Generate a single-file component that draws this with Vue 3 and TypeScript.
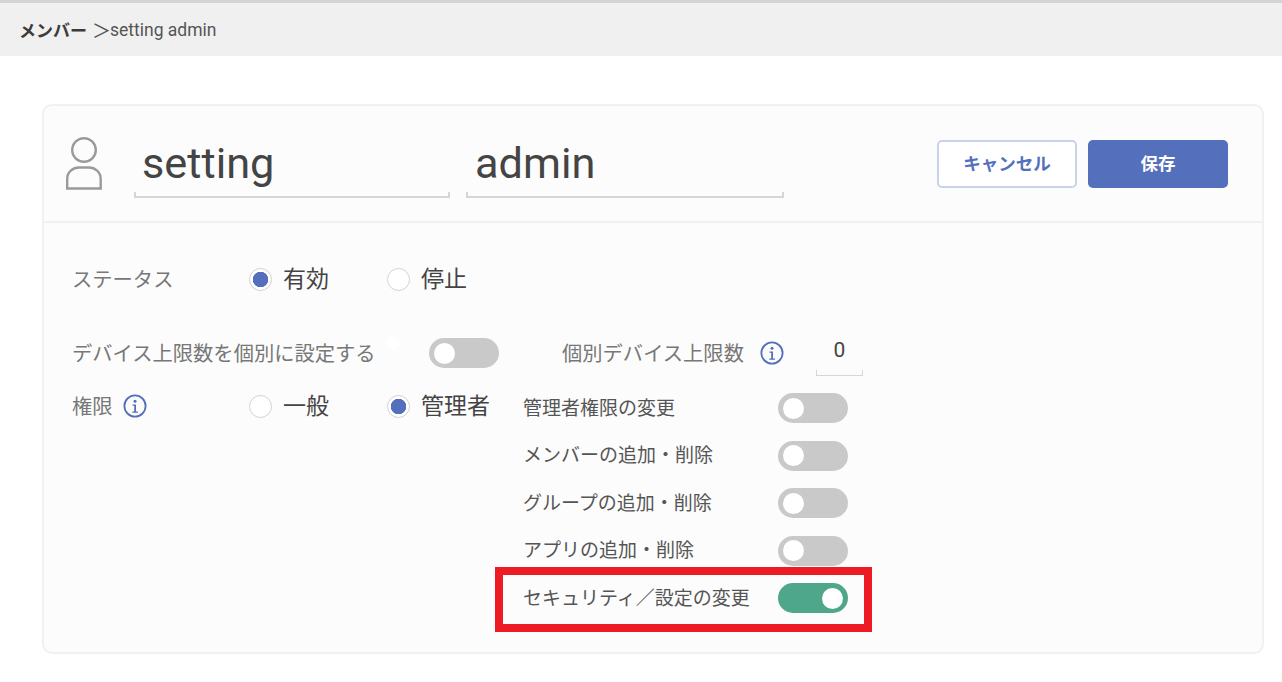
<script setup lang="ts">
const permissions = [
  { label: '管理者権限の変更', on: false },
  { label: 'メンバーの追加・削除', on: false },
  { label: 'グループの追加・削除', on: false },
  { label: 'アプリの追加・削除', on: false },
  { label: 'セキュリティ／設定の変更', on: true },
]
</script>

<template>
  <div class="page">
    <div class="crumb"><b>メンバー</b><span class="gt">＞</span><span class="who">setting admin</span></div>
    <section class="card">
      <header class="head">
        <svg class="user" width="38" height="54" viewBox="0 0 38 54" fill="none" stroke="#9a9a9a" stroke-width="2.4">
          <circle cx="19" cy="13" r="11.8" />
          <path d="M2.2 51.5V42c0-7 5.5-11.5 12-11.5h9.5c6.5 0 12 4.5 12 11.5v9.500z" />
        </svg>
        <div class="field first">setting</div>
        <div class="field second">admin</div>
        <div class="actions">
          <button class="btn cancel">キャンセル</button>
          <button class="btn save">保存</button>
        </div>
      </header>
      <div class="body">
        <div class="status">
          <span class="label">ステータス</span>
          <span class="radio r1"><i class="dot on"></i><em>有効</em></span>
          <span class="radio"><i class="dot"></i><em>停止</em></span>
        </div>
        <div class="device">
          <span class="label dev-label">デバイス上限数を個別に設定する<i class="speck"></i></span>
          <span class="toggle"><i></i></span>
          <span class="label dev-count">個別デバイス上限数</span>
          <svg class="info" width="24" height="24" viewBox="0 0 24 24"><circle cx="12" cy="12" r="10.6" fill="none" stroke="#5470bd" stroke-width="1.8"/><circle cx="12" cy="7.200" r="1.500" fill="#5470bd"/><path d="M9.500 10.500h3.500v7h2v1.200H9.300v-1.200h1.900v-5.800H9.500z" fill="#5470bd"/></svg>
          <div class="count">0</div>
        </div>
        <div class="perm">
          <div class="perm-label">
            <span class="label">権限</span>
            <svg class="info" width="24" height="24" viewBox="0 0 24 24"><circle cx="12" cy="12" r="10.6" fill="none" stroke="#5470bd" stroke-width="1.8"/><circle cx="12" cy="7.200" r="1.500" fill="#5470bd"/><path d="M9.500 10.500h3.500v7h2v1.200H9.300v-1.200h1.900v-5.800H9.500z" fill="#5470bd"/></svg>
          </div>
          <span class="radio r1"><i class="dot"></i><em>一般</em></span>
          <span class="radio r2"><i class="dot on"></i><em>管理者</em></span>
          <ul class="list">
            <li v-for="p in permissions" :key="p.label">
              <span class="plabel">{{ p.label }}</span>
              <span class="toggle" :class="{ active: p.on }"><i></i></span>
            </li>
          </ul>
        </div>
      </div>
    </section>
    <div class="highlight"></div>
  </div>
</template>

<style scoped>
.page {
  position: relative;
  height: 682px;
  overflow: hidden;
  background: #fff;
  font-family: Roboto, "Noto Sans CJK JP", sans-serif;
  color: #444;
}
.crumb {
  height: 53px;
  background: #f0f0f0;
  border-top: 3px solid #d4d4d4;
  padding-left: 19px;
  display: flex;
  align-items: center;
  font-size: 17px;
  color: #555;
}
.crumb b { color: #3c3c3c; font-weight: 700; }
.gt { margin-left: 5px; width: 18px; font-size: 19px; overflow: hidden; white-space: nowrap; }
.who { font-size: 17.5px; }
.card {
  margin: 48px 0 0 42px;
  width: 1222px;
  height: 550px;
  box-sizing: border-box;
  background: #fcfcfc;
  border: 2px solid #f1f1f1;
  border-radius: 10px;
}
.head {
  height: 117px;
  box-sizing: border-box;
  border-bottom: 2px solid #f1f1f1;
  display: flex;
  align-items: flex-start;
  padding-left: 21px;
}
.user { margin-top: 31px; flex: none; }
.field {
  margin-top: 25px;
  height: 67px;
  box-sizing: border-box;
  width: 316px;
  padding-left: 8px;
  line-height: 66px;
  font-size: 43.3px;
  color: #444;
  position: relative;
}
.field::after {
  content: "";
  position: absolute;
  left: 0;
  right: 0;
  bottom: 0;
  height: 6px;
  box-sizing: border-box;
  border: 2px solid #d6d6d6;
  border-top: 0;
}
.first { margin-left: 31px; }
.second { margin-left: 16px; width: 318px; padding-left: 9px; }
.actions { margin-left: auto; margin-right: 34px; margin-top: 34px; display: flex; gap: 11px; }
.btn {
  width: 140px;
  height: 48px;
  box-sizing: border-box;
  border-radius: 5px;
  font-family: inherit;
  font-size: 17.5px;
  font-weight: 700;
  padding: 0 0 4px;
}
.cancel { background: #fff; border: 2px solid #c8d2e8; color: #5470bd; }
.save { background: #5470bd; border: 0; color: #fff; }
.body { padding: 41px 0 0 28px; }
.label { font-size: 20.3px; color: #777; white-space: nowrap; padding-bottom: 2px; }
.status { display: flex; align-items: center; height: 30px; }
.status .label { width: 177px; }
.radio {
  display: flex;
  align-items: center;
  font-size: 23px;
  color: #444;
  white-space: nowrap;
}
.radio em { font-style: normal; padding-bottom: 4px; }
.dot {
  width: 23px;
  height: 23px;
  box-sizing: border-box;
  border: 1.5px solid #d2d2d2;
  border-radius: 50%;
  margin-right: 11px;
  background: #fff;
  flex: none;
}
.dot.on { background: radial-gradient(circle, #5470bd 0 7.5px, #fff 8px); }
.status .r1 { width: 138px; }
.device { display: flex; align-items: center; height: 30px; margin-top: 44px; }
.dev-label { width: 357px; position: relative; }
.speck {
  position: absolute;
  left: 314px;
  top: 0;
  width: 13px;
  height: 13px;
  border-radius: 50%;
  background: #fff;
}
.dev-count { margin-left: 63px; }
.info { margin-left: 16px; flex: none; }
.count {
  margin-left: 32px;
  width: 47px;
  height: 38px;
  margin-top: 7px;
  box-sizing: border-box;
  text-align: center;
  font-size: 21px;
  line-height: 24px;
  color: #444;
  position: relative;
}
.count::after {
  content: "";
  position: absolute;
  left: 0;
  right: 0;
  bottom: 0;
  height: 6px;
  box-sizing: border-box;
  border: 1.5px solid #d6d6d6;
  border-top: 0;
}
.perm { display: flex; align-items: flex-start; margin-top: 23px; }
.perm-label { width: 177px; height: 30px; display: flex; align-items: center; }
.perm-label .info { margin-left: 10px; }
.perm .radio { height: 30px; }
.perm .r1 { width: 138px; }
.perm .r2 { width: 136px; }
.list { list-style: none; margin: 2px 0 0; padding: 0; }
.list li { display: flex; align-items: center; height: 30px; margin-bottom: 17.5px; }
.plabel { width: 255px; font-size: 19px; color: #555; white-space: nowrap; padding-bottom: 4px; }
.toggle {
  display: inline-flex;
  align-items: center;
  width: 70px;
  height: 30px;
  padding: 0 5px;
  box-sizing: border-box;
  border-radius: 15px;
  background: #c9c9c9;
  flex: none;
}
.toggle i { width: 21px; height: 21px; border-radius: 50%; background: #fff; }
.toggle.active { background: #4ea78a; justify-content: flex-end; }
.highlight {
  position: absolute;
  left: 495px;
  top: 567px;
  width: 377px;
  height: 65px;
  box-sizing: border-box;
  border: 8px solid #ed1c24;
  pointer-events: none;
}
</style>
